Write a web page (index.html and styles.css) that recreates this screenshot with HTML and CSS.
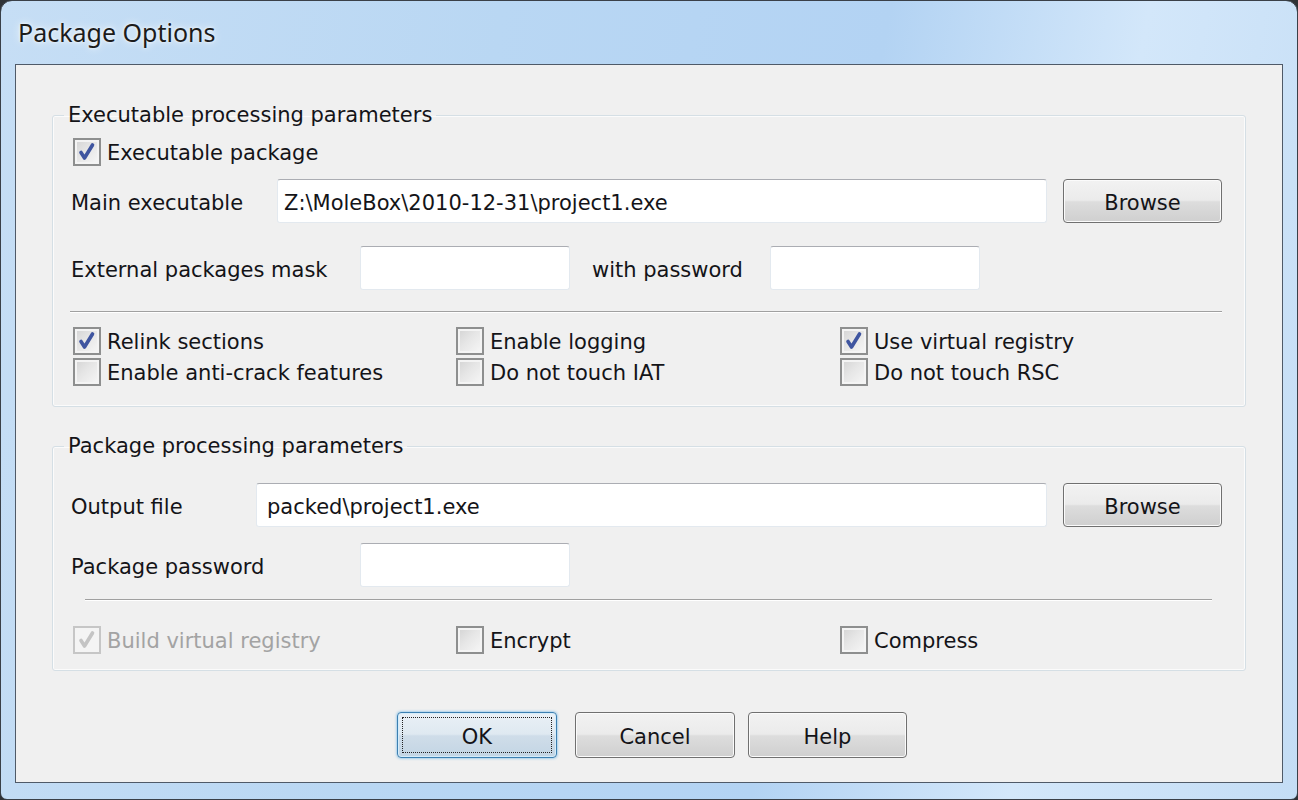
FILE: index.html
```html
<!DOCTYPE html>
<html lang="en">
<head>
<meta charset="utf-8">
<title>Package Options</title>
<link rel="stylesheet" href="styles.css">
</head>
<body>
<div class="window">
  <div class="titlebar"><span class="title">Package Options</span></div>
  <div class="client">
    <fieldset class="group group-exe">
      <legend>Executable processing parameters</legend>
      <label class="check solo"><span class="box checked"><svg viewBox="0 0 28 28" width="28" height="28"><path d="M8 14.5 L11.5 20 L19.5 7" /></svg></span><span class="ctext">Executable package</span></label>
      <div class="row row-main">
        <span class="lbl lbl-main">Main executable</span>
        <div class="field field-main">Z:\MoleBox\2010-12-31\project1.exe</div>
        <button class="btn">Browse</button>
      </div>
      <div class="row row-ext">
        <span class="lbl lbl-wide">External packages mask</span>
        <div class="field field-small"></div>
        <span class="lbl lbl-with">with password</span>
        <div class="field field-small"></div>
      </div>
      <div class="sep"></div>
      <div class="checks">
        <label class="check"><span class="box checked"><svg viewBox="0 0 28 28" width="28" height="28"><path d="M8 14.5 L11.5 20 L19.5 7" /></svg></span><span class="ctext">Relink sections</span></label>
        <label class="check"><span class="box"></span><span class="ctext">Enable logging</span></label>
        <label class="check"><span class="box checked"><svg viewBox="0 0 28 28" width="28" height="28"><path d="M8 14.5 L11.5 20 L19.5 7" /></svg></span><span class="ctext">Use virtual registry</span></label>
        <label class="check"><span class="box"></span><span class="ctext">Enable anti-crack features</span></label>
        <label class="check"><span class="box"></span><span class="ctext">Do not touch IAT</span></label>
        <label class="check"><span class="box"></span><span class="ctext">Do not touch RSC</span></label>
      </div>
    </fieldset>

    <fieldset class="group group-pkg">
      <legend>Package processing parameters</legend>
      <div class="row row-out">
        <span class="lbl lbl-out">Output file</span>
        <div class="field field-out">packed\project1.exe</div>
        <button class="btn">Browse</button>
      </div>
      <div class="row row-pass">
        <span class="lbl lbl-wide">Package password</span>
        <div class="field field-small"></div>
      </div>
      <div class="sep sep-inset"></div>
      <div class="checks checks-pkg">
        <label class="check disabled"><span class="box checked"><svg viewBox="0 0 28 28" width="28" height="28"><path d="M8 14.5 L11.5 20 L19.5 7" /></svg></span><span class="ctext">Build virtual registry</span></label>
        <label class="check"><span class="box"></span><span class="ctext">Encrypt</span></label>
        <label class="check"><span class="box"></span><span class="ctext">Compress</span></label>
      </div>
    </fieldset>

    <div class="actions">
      <button class="btn btn-default"><span class="focus">OK</span></button>
      <button class="btn btn-cancel">Cancel</button>
      <button class="btn btn-help">Help</button>
    </div>
  </div>
</div>
</body>
</html>
```

FILE: styles.css
```css
html, body {
  margin: 0;
  padding: 0;
}

body {
  background: #2f3236;
  font-family: "DejaVu Sans", sans-serif;
  font-size: 21px;
  color: #141418;
}

.window {
  box-sizing: border-box;
  width: 1298px;
  height: 800px;
  border: 1px solid #3a4048;
  border-radius: 12px 12px 7px 7px;
  background: linear-gradient(100deg, #c6def5 0%, #b9d7f3 35%, #b3d3f3 62%, #d3e7fa 80%, #c4ddf5 100%);
  padding: 0 14px 16px 14px;
  display: flex;
  flex-direction: column;
}

.titlebar {
  height: 63px;
  flex: none;
  display: flex;
  align-items: center;
  padding-left: 3px;
}

.title {
  font-family: "Noto Sans", "Open Sans", sans-serif;
  font-size: 25px;
  color: #1c1c1c;
  text-shadow: 0 0 8px rgba(255, 255, 255, 0.95), 0 0 3px rgba(255, 255, 255, 0.9);
  margin-top: -1px;
}

.client {
  flex: 1;
  background: #f0f0f0;
  border: 1px solid #4f5a68;
  padding: 37px 36px 0 36px;
  display: flex;
  flex-direction: column;
}

.group {
  margin: 0;
  border: 1px solid #d5dfe5;
  border-radius: 3px;
  box-shadow: inset 0 0 0 1px #fbfbfb;
  padding: 0 23px 20px 17px;
  min-width: 0;
}

.group legend {
  padding: 0 4px;
  margin-left: -6px;
  line-height: 26px;
  height: 26px;
}

.group-pkg {
  margin-top: 26px;
  padding-bottom: 16px;
}

.check {
  display: flex;
  align-items: center;
  height: 28px;
  white-space: nowrap;
}

.ctext {
  padding-top: 2px;
}

.check.solo {
  margin: 10px 0 0 3px;
}

.box {
  box-sizing: border-box;
  width: 28px;
  height: 28px;
  flex: none;
  border: 2px solid #8e8f8f;
  background: linear-gradient(135deg, #d3d3d3 0%, #e6e6e6 45%, #f7f7f7 100%);
  box-shadow: inset 0 0 0 2px #f4f4f4;
  margin-right: 6px;
  position: relative;
}

.box svg {
  position: absolute;
  left: -2px;
  top: -2px;
}

.box svg path {
  fill: none;
  stroke: #3f55a0;
  stroke-width: 3.6;
  stroke-linecap: round;
  stroke-linejoin: round;
}

.check.disabled {
  color: #a3a3a3;
}

.check.disabled .box {
  border-color: #c6c6c6;
  background: #f4f4f4;
}

.check.disabled .box svg path {
  stroke: #c4c4c4;
}

.row {
  display: flex;
  align-items: center;
  height: 44px;
}

.row-main { margin-top: 13px; }
.row-ext { margin-top: 23px; }
.row-out { margin-top: 24px; }
.row-pass { margin-top: 16px; }

.lbl {
  flex: none;
  padding-left: 1px;
  padding-top: 4px;
  box-sizing: border-box;
  white-space: nowrap;
}

.lbl-main { width: 207px; }
.lbl-wide { width: 290px; }
.lbl-out { width: 186px; }
.lbl-with { width: 178px; margin-left: 22px; padding-left: 0; }

.field {
  box-sizing: border-box;
  height: 44px;
  background: #ffffff;
  border: 1px solid #e3e9ef;
  border-top-color: #abadb3;
  border-radius: 3px;
  display: flex;
  align-items: center;
  padding-left: 6px;
  padding-top: 3px;
  white-space: nowrap;
  color: #141418;
}

.field-main { width: 770px; }
.field-out { width: 791px; padding-left: 10px; }
.field-small { width: 210px; }

.btn {
  box-sizing: border-box;
  width: 159px;
  height: 44px;
  margin-left: 16px;
  border: 1px solid #707070;
  border-radius: 4px;
  background: linear-gradient(#f2f2f2 0%, #ebebeb 48%, #dddddd 52%, #cfcfcf 100%);
  box-shadow: inset 0 0 0 1px #fbfbfb;
  font-family: inherit;
  font-size: 21px;
  color: #141418;
  padding: 3px 0 0 0;
  display: flex;
  align-items: center;
  justify-content: center;
}

.sep {
  height: 1px;
  border-top: 1px solid #a0a0a0;
  background: #ffffff;
  margin-top: 21px;
}

.sep-inset {
  margin: 12px 10px 0 15px;
}

.checks {
  display: grid;
  grid-template-columns: 383px 384px 1fr;
  row-gap: 3px;
  margin: 14px 0 0 3px;
}

.checks-pkg {
  margin-top: 25px;
}

.actions {
  display: flex;
  margin-top: 41px;
  padding-left: 345px;
}

.actions .btn {
  height: 46px;
  margin-left: 0;
}

.btn-default {
  width: 160px;
  border-color: #3c7fb1;
  background: linear-gradient(#e9f0f6 0%, #dfe9f1 48%, #cfdde9 52%, #c3d5e4 100%);
  box-shadow: inset 0 0 0 1px #d4ecfa, 0 0 3px #5fb0e6;
  padding: 4px;
}

.btn-default .focus {
  box-sizing: border-box;
  width: 100%;
  height: 100%;
  border: 1px dotted #222;
  display: flex;
  align-items: center;
  justify-content: center;
  padding-top: 3px;
}

.btn-cancel {
  width: 160px;
  margin-left: 18px !important;
}

.btn-help {
  width: 159px;
  margin-left: 13px !important;
}
```
